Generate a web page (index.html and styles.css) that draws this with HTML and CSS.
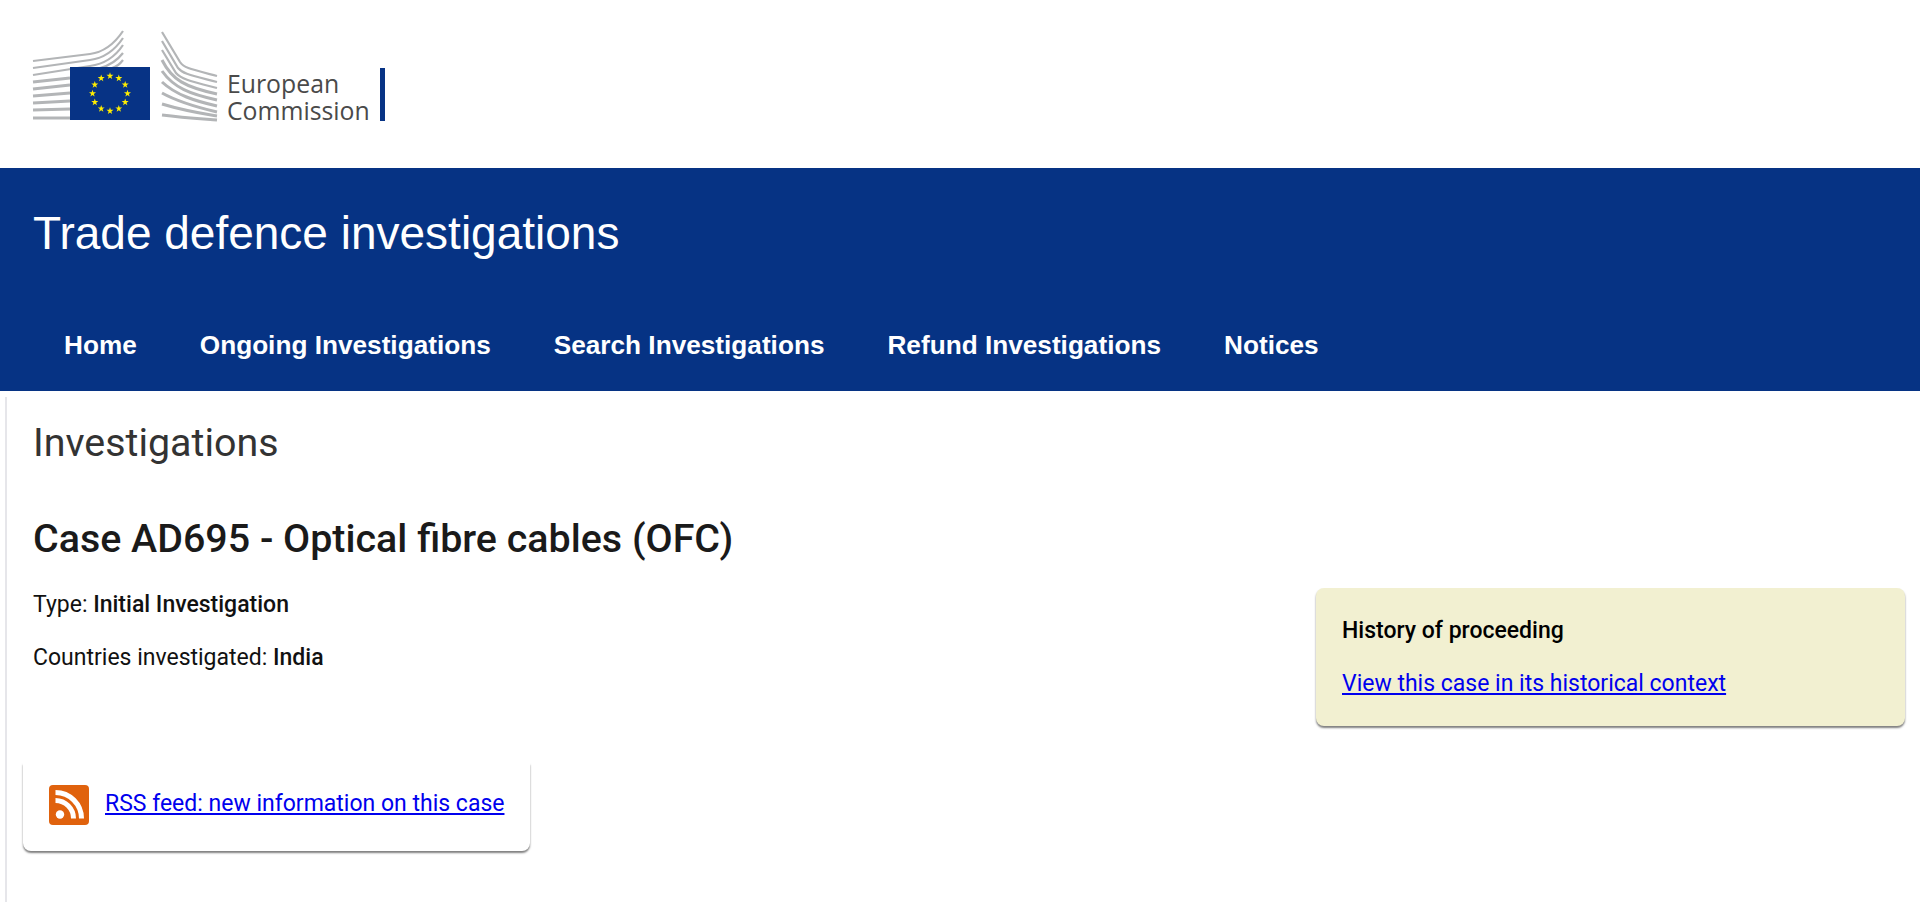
FILE: index.html
```html
<!DOCTYPE html>
<html lang="en">
  <head>
    <meta charset="UTF-8" />
    <title>Trade defence investigations</title>
    <link rel="stylesheet" href="styles.css">
  </head>
  <body>
    <header class="logoBar">
      <svg class="logo" viewBox="30 25 195 100" width="195" height="100" aria-hidden="true">
        <defs>
          <polygon id="star" points="0,-3.7 0.85,-1.2 3.5,-1.2 1.35,0.4 2.15,3 0,1.45 -2.15,3 -1.35,0.4 -3.5,-1.2 -0.85,-1.2" />
        </defs>
        <!-- left wing of the building -->
        <g class="wing wingThin">
          <path d="M33 61 L90 54 C105 52 115 43 123 31" />
          <path d="M33 68 L90 60 C105 58 115 50 123 38" />
          <path d="M33 75 L90 66 C105 64 115 57 123 45" />
          <path d="M100 68 C108 66 116 62 123 53" />
          <path d="M112 68 C116 67 120 64 123 60" />
        </g>
        <g class="wing">
          <path d="M33 82 L70 78" />
          <path d="M33 89 L70 85" />
          <path d="M33 96 L70 93" />
          <path d="M33 103 L70 101" />
          <path d="M33 110 L70 109" />
          <path d="M33 118 L70 118" />
        </g>
        <rect class="flag" x="70" y="67" width="80" height="53" />
        <g class="stars">
          <use href="#star" x="110" y="76" />
          <use href="#star" x="118.8" y="78.3" />
          <use href="#star" x="125.2" y="84.8" />
          <use href="#star" x="127.5" y="93.5" />
          <use href="#star" x="125.2" y="102.3" />
          <use href="#star" x="118.8" y="108.7" />
          <use href="#star" x="110" y="111" />
          <use href="#star" x="101.2" y="108.7" />
          <use href="#star" x="94.8" y="102.3" />
          <use href="#star" x="92.5" y="93.5" />
          <use href="#star" x="94.8" y="84.8" />
          <use href="#star" x="101.2" y="78.3" />
        </g>
        <!-- right wing -->
        <g class="wing wingThin">
          <path d="M162 32 L180 62 C184 68 190 69 217 76" />
          <path d="M162 41 L178 68 C183 74 190 75 217 82" />
          <path d="M162 50 L176 73 C181 79 190 81 217 88" />
        </g>
        <g class="wing">
          <path d="M162 60 C172 80 185 87 217 94" />
          <path d="M162 71 C174 88 190 94 217 100" />
          <path d="M162 82 C176 95 195 101 217 106" />
          <path d="M162 93 C180 103 200 108 217 112" />
          <path d="M162 104 C185 111 205 114 217 116" />
          <path d="M162 115 C185 118 205 119 217 120" />
        </g>
      </svg>
      <div class="logoWords">European<br>Commission</div>
      <div class="logoRule"></div>
    </header>

    <div class="band">
      <div class="siteTitle">Trade defence investigations</div>
      <nav class="mainNav">
        <a href="#">Home</a>
        <a href="#">Ongoing Investigations</a>
        <a href="#">Search Investigations</a>
        <a href="#">Refund Investigations</a>
        <a href="#">Notices</a>
      </nav>
    </div>

    <main class="content">
      <h1 class="pageTitle">Investigations</h1>
      <h2 class="caseTitle">Case AD695 - Optical fibre cables (OFC)</h2>

      <div class="caseRow">
        <div class="caseInfo">
          <p>Type: <strong>Initial Investigation</strong></p>
          <p>Countries investigated: <strong>India</strong></p>
        </div>
        <aside class="historyCard">
          <p><strong>History of proceeding</strong></p>
          <p><a href="#">View this case in its historical context</a></p>
        </aside>
      </div>

      <div class="rssCard">
        <svg class="rssIcon" viewBox="0 0 40 40" width="40" height="40" aria-hidden="true">
          <rect width="40" height="40" rx="4" fill="#e0620d" />
          <circle cx="11" cy="29.5" r="4.2" fill="#fff" />
          <path d="M6.5 15.5 A18 18 0 0 1 24.5 33.5" />
          <path d="M6.5 7.5 A26 26 0 0 1 32.5 33.5" />
        </svg>
        <a href="#">RSS feed: new information on this case</a>
      </div>
    </main>
  </body>
</html>
```

FILE: styles.css
```css
/* ============ Base ============ */
html,
body {
  margin: 0;
  height: 100%;
  overflow: hidden;
  background: #fff;
  font-family: Roboto, sans-serif;
  font-size: 23px;
  color: #111;
}

a {
  color: #0000ee;
}

/* ============ Logo bar ============ */
.logoBar {
  display: flex;
  align-items: flex-start;
  height: 168px;
  padding: 25px 0 0 30px;
  box-sizing: border-box;
}
.logo {
  display: block;
  flex: none;
}
.wing path {
  fill: none;
  stroke: #b3b5b7;
  stroke-width: 3;
}
.wingThin path {
  stroke-width: 2.2;
}
.flag {
  fill: #073385;
}
.stars {
  fill: #ffed00;
}
.logoWords {
  width: 153px;
  margin: 45px 0 0 2px;
  font-family: "Open Sans", sans-serif;
  font-size: 24.8px;
  line-height: 27px;
  color: #4a4a4a;
  white-space: nowrap;
}
.logoRule {
  width: 5px;
  height: 53px;
  margin-top: 43px;
  background: #073385;
}

/* ============ Blue band ============ */
.band {
  background: #063384;
  color: #fff;
  font-family: "Liberation Sans", sans-serif;
  height: 223px;
  box-sizing: border-box;
  padding: 37px 33px 0;
}
.siteTitle {
  font-size: 46px;
  line-height: 56px;
}
.mainNav {
  display: flex;
  gap: 63px;
  margin-top: 68px;
  padding-left: 31px;
}
.mainNav a {
  color: #fff;
  font-size: 26.2px;
  font-weight: 700;
  line-height: 32px;
  text-decoration: none;
}

/* ============ Content ============ */
.content {
  margin: 6px 0 0 5px;
  border-left: 2px solid #e6e6ea;
  padding: 24px 15px 0 26px;
  height: 505px;
}
.pageTitle {
  margin: 0;
  font-size: 39.4px;
  font-weight: 400;
  line-height: 44px;
  color: #333;
}
.caseTitle {
  margin: 50px 0 0;
  font-size: 39.4px;
  font-weight: 500;
  line-height: 48px;
  color: #1a1a1a;
}
.caseRow {
  display: flex;
  justify-content: space-between;
  align-items: flex-start;
}
.caseInfo p {
  margin: 28px 0 0;
  line-height: 27px;
}
.caseInfo p + p {
  margin-top: 26px;
}
.caseInfo strong {
  font-weight: 500;
}
.historyCard {
  box-sizing: border-box;
  width: 589px;
  height: 138px;
  margin-top: 25px;
  padding: 29px 26px 0;
  background: #f2f0d1;
  border-radius: 8px;
  box-shadow: 0 2px 2px rgba(0, 0, 0, 0.5);
  color: #000;
}
.historyCard p {
  margin: 0 0 26px;
  line-height: 27px;
}
.historyCard strong {
  font-weight: 500;
}
.rssCard {
  display: flex;
  align-items: center;
  gap: 16px;
  box-sizing: border-box;
  width: 507px;
  height: 88px;
  margin: 37px 0 0 -10px;
  padding: 0 0 4px 26px;
  background: #fff;
  border-radius: 0 0 8px 8px;
  box-shadow: 0 2px 2px rgba(0, 0, 0, 0.5);
}
.rssCard a {
  margin-bottom: 4px;
  white-space: nowrap;
}
.rssIcon {
  flex: none;
}
.rssIcon path {
  fill: none;
  stroke: #fff;
  stroke-width: 5;
}
```
